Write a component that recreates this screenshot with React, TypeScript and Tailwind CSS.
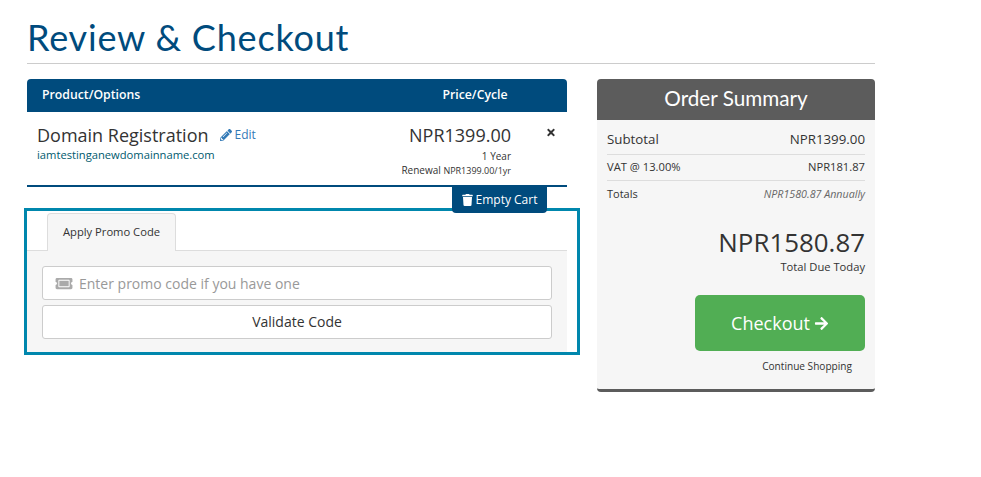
import { FaPencilAlt, FaTimes, FaTrash, FaTicketAlt, FaArrowRight } from "react-icons/fa";

const os = "font-['Open_Sans','Noto_Sans',sans-serif]";

export default function App() {
  return (
    <div className={`w-[981px] h-[477px] bg-white overflow-hidden pl-[27px] text-[#333] ${os}`}>
      <div className="w-[848px]">
        <h1 className="text-[#004b7d] text-[36px] tracking-[0.8px] leading-[40px] pt-[17px] pb-[6px] font-['Lato',sans-serif] font-normal border-b border-[#ccc]">
          Review &amp; Checkout
        </h1>
        <div className="flex mt-[15px] gap-[30px] items-start">
          <div className="w-[540px]">
            <div className="h-[33px] bg-[#004b7d] rounded-t-[4px] flex items-center text-white text-[12.25px] font-semibold pl-[15px]">
              <div className="w-[383px]">Product/Options</div>
              <div className="w-[100px] text-center">Price/Cycle</div>
            </div>
            <div className="h-[75px] border-b-2 border-[#004b7d] flex pl-[10px]">
              <div className="w-[335px] pt-[10px]">
                <div className="flex items-center h-[26px]">
                  <span className="text-[18px] leading-[26px]">Domain Registration</span>
                  <FaPencilAlt className="ml-[11px] w-[12px] h-[12px] text-[#337ab7]" />
                  <span className="ml-[3px] text-[12px] text-[#337ab7]">Edit</span>
                </div>
                <div className="text-[11.2px] leading-[14px] text-[#005a6e]">iamtestinganewdomainname.com</div>
              </div>
              <div className="w-[139px] text-right pt-[10px]">
                <div className="text-[18px] leading-[26px]">NPR1399.00</div>
                <div className="text-[10px] leading-[14px] mt-[1px]">1 Year</div>
                <div className="text-[10px] leading-[15px]">Renewal <span className="text-[9px]">NPR1399.00/1yr</span></div>
              </div>
              <div className="flex-1 flex justify-center pt-[15px] pl-[24px]">
                <FaTimes className="w-[10px] h-[11px] text-[#333]" />
              </div>
            </div>
            <div className="flex justify-end pr-[20px]">
              <div className="relative z-10 w-[95px] h-[26px] bg-[#004b7d] rounded-b-[4px] text-white text-[12px] font-medium flex items-center justify-center gap-[3px]">
                <FaTrash className="w-[11px] h-[12px]" />
                <span>Empty Cart</span>
              </div>
            </div>
            <div className="-mt-[5px] -ml-[3px] w-[556px] border-[3px] border-[#0087ad]">
              <div className="w-[540px]">
                <div className="h-[40px] pt-[2px] pl-[20px] border-b border-[#ddd]">
                  <div className="w-[129px] h-[38px] bg-[#f6f6f6] border border-b-0 border-[#ddd] rounded-t-[4px] flex items-center justify-center text-[11.2px]">
                    Apply Promo Code
                  </div>
                </div>
                <div className="bg-[#f6f6f6] px-[15px] pt-[15px] pb-[13px]">
                  <div className="h-[34px] bg-white border border-[#ccc] rounded-[3px] flex items-center pl-[12px] text-[14px] text-[#999]">
                    <FaTicketAlt className="w-[18px] h-[15px] text-[#aaa]" />
                    <span className="ml-[6px]">Enter promo code if you have one</span>
                  </div>
                  <div className="mt-[5px] h-[34px] pb-[2px] bg-white border border-[#ccc] rounded-[3px] flex items-center justify-center text-[14px]">
                    Validate Code
                  </div>
                </div>
              </div>
            </div>
          </div>
          <div className="w-[278px] h-[313px] bg-[#f6f6f6] rounded-[4px] border-b-[3px] border-[#5c5c5c] flex flex-col">
            <div className="h-[41px] bg-[#5c5c5c] rounded-t-[4px] text-white text-[20.7px] pb-[1px] font-['Lato',sans-serif] flex items-center justify-center shrink-0">
              Order Summary
            </div>
            <div className="px-[10px] flex flex-col">
              <div className="h-[35px] pt-[6px] border-b border-[#ddd] flex items-center justify-between text-[13.3px]">
                <span>Subtotal</span><span>NPR1399.00</span>
              </div>
              <div className="h-[26px] border-b border-[#ddd] flex items-center justify-between text-[11.2px]">
                <span>VAT @ 13.00%</span><span>NPR181.87</span>
              </div>
              <div className="h-[26px] pt-[1px] flex items-center justify-between text-[11px]">
                <span>Totals</span><span className="italic text-[10.7px] text-[#666]">NPR1580.87 Annually</span>
              </div>
              <div className="text-right text-[25.9px] leading-[34px] mt-[18px]">NPR1580.87</div>
              <div className="text-right text-[11.2px] leading-[16px]">Total Due Today</div>
              <div className="self-end mt-[20px] w-[170px] h-[56px] bg-[#51ae54] rounded-[5px] text-white text-[18px] flex items-center justify-center gap-[4px]">
                <span>Checkout</span><FaArrowRight className="w-[15px] h-[15px]" />
              </div>
              <div className="self-end mr-[13px] mt-[8px] text-[10.1px] leading-[14px]">Continue Shopping</div>
            </div>
          </div>
        </div>
      </div>
    </div>
  );
}
